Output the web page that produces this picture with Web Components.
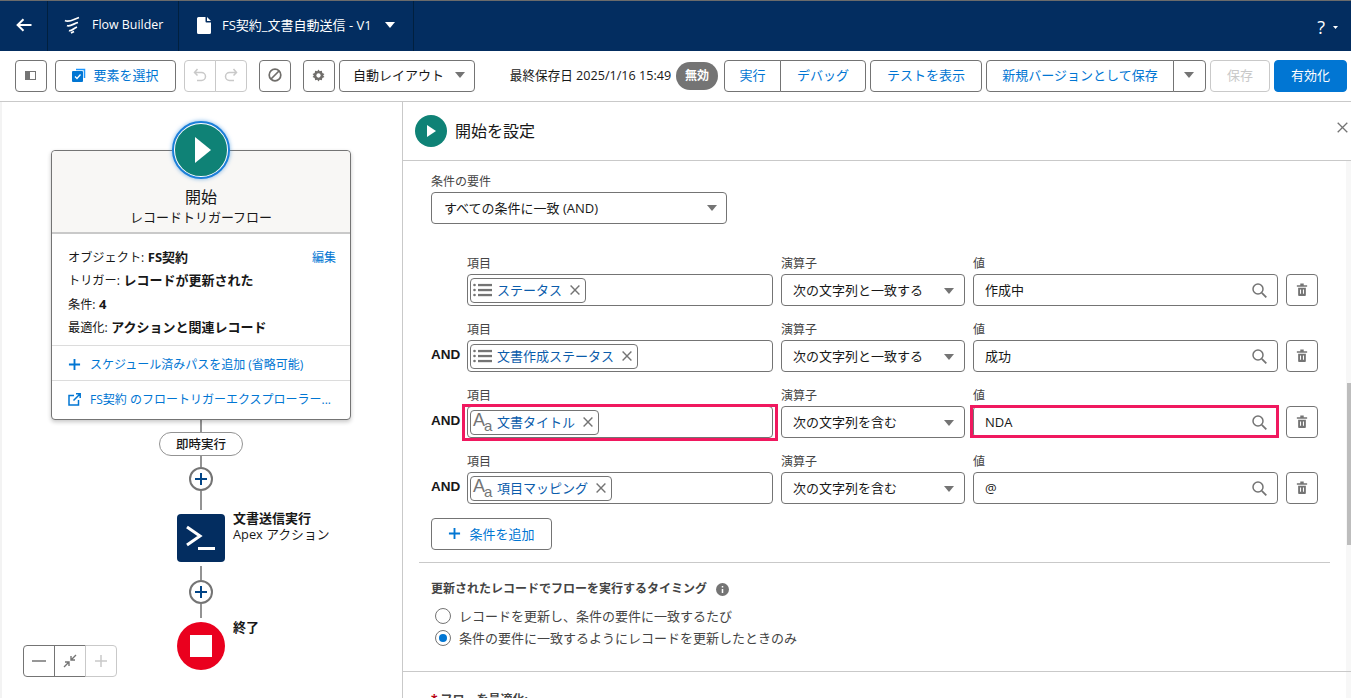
<!DOCTYPE html>
<html lang="ja"><head><meta charset="utf-8"><title>Flow Builder</title>
<style>
html,body{margin:0;height:100%;overflow:hidden;background:#fff}
body{font:13px/18px "Open Sans","Noto Sans CJK JP",sans-serif;color:#181818}
</style></head><body>
<fb-app></fb-app>
<script>
const caret=(c='#747474',w=10,h=6)=>`<svg width="${w}" height="${h}" viewBox="0 0 12 7" preserveAspectRatio="none" style="display:block"><path d="M0 0h12L6 7z" fill="${c}"/></svg>`;
const plus=(c,s=14,w=2)=>`<svg width="${s}" height="${s}" viewBox="0 0 14 14" style="display:block"><path d="M7 1v12M1 7h12" stroke="${c}" stroke-width="${w}" fill="none"/></svg>`;
function def(name,css,html){
  customElements.define(name,class extends HTMLElement{
    connectedCallback(){
      if(this.shadowRoot)return;
      const s=this.attachShadow({mode:'open'});
      const a=n=>this.getAttribute(n);
      s.innerHTML=`<style>${css}</style>`+(typeof html==='function'?html(a,this):html);
    }
  });
}
def('fb-btn',`
:host{display:inline-flex;align-items:center;justify-content:center;box-sizing:border-box;height:32px;border:1px solid #747474;border-radius:4px;background:#fff;color:#0176d3;font-size:13px;white-space:nowrap;gap:6px;padding-bottom:1px}
:host([off]){border-color:#c9c9c9;color:#c9c9c9}
:host([brand]){background:#0176d3;border-color:#0176d3;color:#fff}
:host([l]){border-radius:4px 0 0 4px}
:host([r]){border-radius:0 4px 4px 0;margin-left:-1px}
`,`<slot></slot>`);

def('fb-header',`
:host{display:flex;box-sizing:border-box;height:51px;flex:none;background:#032d60;border-top:1px solid #6b6b6b;color:#fff;align-items:stretch;font-size:12.400px}
.c{display:flex;align-items:center;box-sizing:border-box;border-right:1px solid #01203f}
.back{width:48px;justify-content:center;padding-bottom:2px}
.app{width:131px;padding-left:16px;gap:12px;padding-bottom:2px}
.doc{width:235px;padding-left:18px;padding-bottom:2px}
.doc .t{margin-left:11px;margin-right:13px;font-size:13px}
.help{margin-left:auto;display:flex;align-items:center;padding:2px 13px 0 0;gap:8px;font-size:18px}
`,`<div class="c back"><svg width="16" height="14" viewBox="0 0 16 14"><path d="M15.500 7H2M7.500 1.200 1.600 7l5.900 5.800" stroke="#fff" stroke-width="2" fill="none"/></svg></div>
<div class="c app"><svg width="16" height="18" viewBox="0 0 16 18"><path d="M1 4.500C5 7 10 3 15 1.500M3 9.500C6 11 10 7.500 14 6.500M5 14.500c2 1 5-2.500 8-3.500M7 17l3-1.500" stroke="#fff" stroke-width="1.800" fill="none"/></svg><span>Flow Builder</span></div>
<div class="c doc"><svg width="14" height="17" viewBox="0 0 14 17"><path d="M1.500 0H8.500V4.500a1 1 0 0 0 1 1H14V15.500a1.500 1.500 0 0 1-1.500 1.500h-11A1.500 1.500 0 0 1 0 15.500v-14A1.500 1.500 0 0 1 1.500 0zM10 0l4 4h-4z" fill="#fff"/></svg><span class="t">FS契約_文書自動送信 - V1</span>${caret('#fff')}</div>
<div class="help"><span>?</span>${caret('#fff',5,3)}</div>`);

def('fb-toolbar',`
:host{display:flex;box-sizing:border-box;height:51px;flex:none;align-items:center;padding:0 4px 1px 15px;border-bottom:1px solid #c9c9c9;background:#fff;font-size:12.600px;color:#181818}
.ib{width:32px}
.sel{width:121px;margin-left:8px;gap:7px}
.sel span{color:#0176d3}
.ur{width:32px}
.auto{display:flex;align-items:center;justify-content:space-between;box-sizing:border-box;width:136px;height:32px;margin-left:4px;padding:0 9px 1px 13px;border:1px solid #747474;border-radius:4px;font-size:13px}
.saved{margin-left:35px;white-space:nowrap;padding-top:1px}
.bdg{margin-left:5px;box-sizing:border-box;width:42px;height:28px;border-radius:14px;background:#747474;color:#fff;font-weight:700;font-size:12px;display:flex;align-items:center;justify-content:center}
`,`
<fb-btn class="ib"><svg width="11" height="9" viewBox="0 0 11 9"><rect x=".5" y=".5" width="10" height="8" fill="none" stroke="#747474"/><rect x="1" y="1" width="4" height="7" fill="#747474"/></svg></fb-btn>
<fb-btn class="sel"><svg width="14" height="14" viewBox="0 0 14 14"><path d="M4 1.500h8.500V10" fill="none" stroke="#1b96ff" stroke-width="1.500"/><rect x="0" y="3" width="11" height="11" rx="1" fill="#0176d3"/><path d="M3 8.500l2 2 3.500-4" stroke="#fff" stroke-width="1.300" fill="none"/></svg><span>要素を選択</span></fb-btn>
<fb-btn l off class="ur" style="margin-left:8px"><svg width="14" height="14" viewBox="0 0 14 14"><path d="M4.500 1 1.500 4.500l3 3M2 4.500h6.500a4 4 0 0 1 0 8H4" fill="none" stroke="#c9c9c9" stroke-width="1.500"/></svg></fb-btn>
<fb-btn r off class="ur"><svg width="14" height="14" viewBox="0 0 14 14"><path d="M9.500 1l3 3.500-3 3M12 4.500H5.500a4 4 0 0 0 0 8H10" fill="none" stroke="#c9c9c9" stroke-width="1.500"/></svg></fb-btn>
<fb-btn class="ib" style="margin-left:12px"><svg width="14" height="14" viewBox="0 0 14 14"><circle cx="7" cy="7" r="5.800" fill="none" stroke="#706e6b" stroke-width="1.700"/><path d="M3 11 11 3" stroke="#706e6b" stroke-width="1.700"/></svg></fb-btn>
<fb-btn class="ib" style="margin-left:12px"><svg width="13" height="13" viewBox="0 0 14 14"><path d="M7 .5l1.300 2 2.300-.5.500 2.300 2.300 1.200L12 7l1.400 1.500-2.300 1.200-.5 2.300-2.300-.5L7 13.500l-1.300-2-2.300.5-.5-2.300L.6 8.500 2 7 .6 5.500l2.300-1.200.5-2.300 2.300.5z" fill="#706e6b"/><circle cx="7" cy="7" r="2.300" fill="#fff"/></svg></fb-btn>
<div class="auto"><span>自動レイアウト</span>${caret()}</div>
<span class="saved">最終保存日 2025/1/16 15:49</span><span class="bdg">無効</span>
<fb-btn l style="width:57px;margin-left:6px">実行</fb-btn><fb-btn r style="width:86px">デバッグ</fb-btn>
<fb-btn style="width:112px;margin-left:4px">テストを表示</fb-btn>
<fb-btn l style="width:188px;margin-left:4px">新規バージョンとして保存</fb-btn><fb-btn r style="width:33px">${caret()}</fb-btn>
<fb-btn off style="width:60px;margin-left:4px">保存</fb-btn>
<fb-btn brand style="width:73px;margin-left:4px">有効化</fb-btn>`);

def('fb-node-row',`
:host{display:flex;align-items:baseline;padding:0 14px 0 16px;height:23.400px;line-height:23.400px;font-size:12.200px;white-space:nowrap}
b{margin-left:3.500px;font-weight:700;font-size:13px}
a{margin-left:auto;color:#0176d3;font-size:12px}
`,a=>`<span>${a('k')}</span><b>${a('v')}</b>${a('edit')!==null?'<a>編集</a>':''}`);

def('fb-card-link',`
:host{display:flex;align-items:center;box-sizing:border-box;height:35px;border-top:1px solid #dcdcdc;padding:3px 16px 0;color:#0176d3;font-size:12px;gap:9px;white-space:nowrap}
:host([last]){height:38px;padding:0 16px}
`,`<slot name="i"></slot><slot></slot>`);

def('fb-start-card',`
:host{display:block;position:relative;box-sizing:border-box;width:300px;height:270px;border:1px solid #747474;border-radius:4px;background:#fff;box-shadow:0 2px 4px rgba(0,0,0,.22)}
.head{height:83px;background:#f8f7f5;border-bottom:2px solid #c9c9c9;border-radius:4px 4px 0 0;box-sizing:border-box;text-align:center;padding-top:36px}
.t{font-size:16px;line-height:20px}
.s{font-size:13px;line-height:20px}
.body{padding:12px 0 0;height:111px;box-sizing:border-box}
.play{position:absolute;left:121px;top:-29px;width:56px;height:56px;box-sizing:border-box;border-radius:50%;background:#0f8276;border:2px solid #fff;outline:2px solid #1b7fd8;outline-offset:-1px;box-shadow:0 0 4px 1px rgba(27,127,216,.6);display:flex;align-items:center;justify-content:center}
.play svg{margin-left:3px}
`,`<div class="play"><svg width="16" height="26" viewBox="0 0 16 26"><path d="M0 0l16 13L0 26z" fill="#fff"/></svg></div>
<div class="head"><div class="t">開始</div><div class="s">レコードトリガーフロー</div></div>
<div class="body"><fb-node-row k="オブジェクト:" v="FS契約" edit></fb-node-row><fb-node-row k="トリガー:" v="レコードが更新された"></fb-node-row><fb-node-row k="条件:" v="4"></fb-node-row><fb-node-row k="最適化:" v="アクションと関連レコード"></fb-node-row></div>
<fb-card-link><span slot="i" style="display:flex">${plus('#0176d3',13)}</span>スケジュール済みパスを追加 (省略可能)</fb-card-link>
<fb-card-link last><span slot="i" style="display:flex"><svg width="13" height="13" viewBox="0 0 13 13"><path d="M6 2.500H1v9.500h9.500V7M8 .8h4.200V5M12 1 5.500 7.500" fill="none" stroke="#0176d3" stroke-width="1.500"/></svg></span>FS契約 のフロートリガーエクスプローラー...</fb-card-link>`);

def('fb-add',`
:host{display:flex;box-sizing:border-box;width:24px;height:24px;border:2px solid #747474;border-radius:50%;background:#fff;align-items:center;justify-content:center;flex:none}
`,plus('#014486',14,2));
def('fb-line',`:host{display:block;width:2px;background:#939393;flex:none}`,'');

def('fb-canvas',`
:host{display:flex;flex-direction:column;align-items:center;position:relative;box-sizing:border-box;width:403px;flex:none;border-left:2px solid #f3f3f3;border-right:1px solid #c9c9c9;padding:48px 0 0 0;overflow:hidden}
.col{display:flex;flex-direction:column;align-items:center;margin-left:-2px}
.pill{box-sizing:border-box;width:84px;height:24px;border:1px solid #939393;border-radius:12px;background:#fff;font-size:12.500px;font-weight:500;display:flex;align-items:center;justify-content:center;flex:none;padding-top:1px}
.node{position:relative;flex:none;width:48px;height:48px}
.box{width:48px;height:48px;border-radius:4px;background:#032d60;display:block}
.stop{width:48px;height:48px;border-radius:50%;background:#ea001e;display:flex;align-items:center;justify-content:center}
.stop i{display:block;width:22px;height:22px;background:#fff}
.lb{position:absolute;left:56px;top:-4px;white-space:nowrap;font-size:12.800px;line-height:16px}
.lb b{display:block;font-weight:700;font-size:13px}
.zoom{position:absolute;left:21px;top:543px;display:flex}
.zoom fb-btn{width:32px}
`,`<div class="col">
<fb-start-card></fb-start-card>
<fb-line style="height:12px"></fb-line><div class="pill">即時実行</div>
<fb-line style="height:11px"></fb-line><fb-add></fb-add><fb-line style="height:19px"></fb-line>
<div class="node" style="margin-top:4px"><svg class="box" viewBox="0 0 48 48"><path d="M10 13l13 9-13 9" fill="none" stroke="#fff" stroke-width="3"/><path d="M21 34.500h17" stroke="#fff" stroke-width="3"/></svg><div class="lb"><b>文書送信実行</b>Apex アクション</div></div>
<fb-line style="height:14px;margin-top:4px"></fb-line><fb-add></fb-add><fb-line style="height:14px"></fb-line>
<div class="node" style="margin-top:4px"><div class="stop"><i></i></div><div class="lb" style="top:-3px"><b>終了</b></div></div>
</div>
<div class="zoom">
<fb-btn l><svg width="14" height="14" viewBox="0 0 14 14"><path d="M0 7h14" stroke="#747474" stroke-width="1.500"/></svg></fb-btn>
<fb-btn r style="border-radius:0;"><svg width="14" height="14" viewBox="0 0 14 14"><path d="M13 1 8.500 5.500M8 2v4h4M1 13l4.500-4.500M6 12V8H2" stroke="#747474" stroke-width="1.400" fill="none"/></svg></fb-btn>
<fb-btn r off style="margin-left:-1px">${plus('#c9c9c9',14,1.500)}</fb-btn>
</div>`);

def('fb-label',`:host{display:block;font-size:12px;line-height:18px;color:#444;white-space:nowrap}`,`<slot></slot>`);

def('fb-input',`
:host{display:flex;position:relative;align-items:center;box-sizing:border-box;height:32px;border:1px solid #747474;border-radius:4px;background:#fff;font-size:13px;padding:0 10px 0 11px;white-space:nowrap}
.a{margin-left:auto;display:flex;padding-top:1px}
.hl{position:absolute;border:3px solid #f0185f;pointer-events:none}
`,a=>`<slot></slot><span class="a"><slot name="a"></slot></span>${a('hl')?`<div class="hl" style="inset:${a('hl')}"></div>`:''}`);

def('fb-pill',`
:host{display:flex;align-items:center;box-sizing:border-box;height:25px;border:1px solid #747474;border-radius:4px;padding:0 5px 0 2px;color:#0b5cab;font-size:13px;white-space:nowrap;background:#fff}
.t{margin-left:5px}
.x{margin-left:8px;display:flex}
.aa{color:#747474;width:19px;height:23px;position:relative;font-family:"Liberation Sans",sans-serif;flex:none}
.aa i{position:absolute;font-style:normal;line-height:1}
`,a=>{
 const ic=a('icon')==='list'
 ?`<svg width="19" height="14" viewBox="0 0 19 14"><g fill="#747474"><circle cx="1.500" cy="2" r="1.300"/><circle cx="1.500" cy="7" r="1.300"/><circle cx="1.500" cy="12" r="1.300"/><rect x="5" y=".9" width="14" height="2.300"/><rect x="5" y="5.900" width="14" height="2.300"/><rect x="5" y="10.900" width="14" height="2.300"/></g></svg>`
 :`<span class="aa"><i style="left:0;top:0;font-size:18px">A</i><i style="left:11px;top:7px;font-size:15px">a</i></span>`;
 return ic+`<span class="t">${a('label')}</span><span class="x"><svg width="10" height="10" viewBox="0 0 10 10"><path d="M.6.600l8.800 8.800M9.400.600l-8.800 8.800" stroke="#747474" stroke-width="1.400"/></svg></span>`;
});

const search=`<svg width="15" height="15" viewBox="0 0 15 15" style="display:block"><circle cx="6" cy="6" r="5" fill="none" stroke="#747474" stroke-width="1.500"/><path d="M9.800 9.800 14.300 14.300" stroke="#747474" stroke-width="1.800"/></svg>`;
def('fb-condition',`
:host{display:grid;grid-template-columns:28px 306px 184px 305px 32px;column-gap:8px;height:66px;box-sizing:border-box}
.and{font-weight:700;font-size:13.500px;line-height:18px;padding-top:30px;white-space:nowrap;font-family:"Liberation Sans",sans-serif;color:#181818}
.f{display:flex;flex-direction:column;padding-top:6px;box-sizing:border-box}
.f fb-label{height:18px;line-height:16px}
.fi{padding:0 0 0 2px}
.tr{margin-top:24px;width:32px}
`,a=>`<div class="and">${a('and')!==null?'AND':''}</div>
<div class="f"><fb-label>項目</fb-label><fb-input class="fi" ${a('hf')?`hl="${a('hf')}"`:''}><fb-pill icon="${a('icon')}" label="${a('field')}"></fb-pill></fb-input></div>
<div class="f"><fb-label>演算子</fb-label><fb-input><span>${a('op')}</span><span slot="a">${caret()}</span></fb-input></div>
<div class="f"><fb-label>値</fb-label><fb-input ${a('hv')?`hl="${a('hv')}"`:''}><span>${a('val')}</span><span slot="a">${search}</span></fb-input></div>
<fb-btn class="tr"><svg width="12" height="13" viewBox="0 0 14 15"><path d="M5 1.500h4M1 3.500h12" stroke="#747474" stroke-width="1.800" fill="none"/><path d="M2.500 5.500h9V14a1 1 0 0 1-1 1h-7a1 1 0 0 1-1-1z" fill="#747474"/><path d="M5.300 7.500v5M8.700 7.500v5" stroke="#fff" stroke-width="1.200"/></svg></fb-btn>`);

def('fb-radio',`
:host{display:flex;align-items:center;height:22px;font-size:13px;color:#444;white-space:nowrap;padding-left:4px;gap:8px}
.r{box-sizing:border-box;width:16px;height:16px;border:1px solid #747474;border-radius:50%;background:#fff;display:flex;align-items:center;justify-content:center;flex:none}
.r i{display:block;width:8px;height:8px;border-radius:50%;background:#0176d3}
`,a=>`<span class="r">${a('on')!==null?'<i></i>':''}</span><slot></slot>`);

def('fb-panel',`
:host{display:flex;flex-direction:column;flex:1;min-width:0;position:relative;overflow:hidden;background:#fff}
.h{flex:none;height:59px;box-sizing:border-box;border-bottom:1px solid #c9c9c9;display:flex;align-items:center;padding:0 0 0 12px;position:relative}
.ic{width:32px;height:32px;border-radius:50%;background:#0f8276;display:flex;align-items:center;justify-content:center}
.ti{margin-left:8px;font-size:16px;line-height:20px}
.cl{margin-left:auto;margin-right:3px;display:flex;margin-top:-8px}
.b{flex:1;padding:12px 0 0 28px;position:relative}
.s{width:296px;margin-top:1px;display:flex;align-items:center;justify-content:space-between;box-sizing:border-box;height:32px;border:1px solid #747474;border-radius:4px;padding:0 9px 0 12px;font-size:13px}
.conds{margin-top:26px}
.add{width:121px;margin-top:4px;gap:8px}
.add span{color:#0176d3}
.hr{height:1px;background:#c9c9c9;margin:12px 21px 0 -12px}
.q{margin-top:17px;font-weight:700;font-size:12px;line-height:18px;color:#444;display:flex;align-items:center;gap:9px}
.hr2{height:1px;background:#c9c9c9;margin:22px 0 0 -28px}
.opt{margin-top:19px;font-size:12px;font-weight:700;color:#444}
.opt em{color:#ba0517;font-style:normal;margin-right:3px}
.tk{position:absolute;right:0;top:59px;bottom:0;width:5px;background:#f7f7f7}
.sb{position:absolute;right:0;top:281px;width:4px;height:162px;background:#bdbdbd}
`,`<div class="h"><div class="ic"><svg width="9" height="12" viewBox="0 0 9 12"><path d="M0 0l9 6-9 6z" fill="#fff"/></svg></div><div class="ti">開始を設定</div>
<div class="cl"><svg width="11" height="11" viewBox="0 0 11 11"><path d="M.7.700l9.600 9.600M10.300.700.7 10.300" stroke="#747474" stroke-width="1.300"/></svg></div></div>
<div class="tk"></div>
<div class="b">
<fb-label>条件の要件</fb-label>
<div class="s"><span>すべての条件に一致 (AND)</span>${caret()}</div>
<div class="conds">
<fb-condition icon="list" field="ステータス" op="次の文字列と一致する" val="作成中"></fb-condition>
<fb-condition and icon="list" field="文書作成ステータス" op="次の文字列と一致する" val="成功"></fb-condition>
<fb-condition and icon="text" field="文書タイトル" op="次の文字列を含む" val="NDA" hf="-3px -6px -4px -6px" hv="-2px -2px -1px -4px"></fb-condition>
<fb-condition and icon="text" field="項目マッピング" op="次の文字列を含む" val="@"></fb-condition>
</div>
<fb-btn class="add">${plus('#0176d3',13)}<span>条件を追加</span></fb-btn>
<div class="hr"></div>
<div class="q">更新されたレコードでフローを実行するタイミング<svg width="13" height="13" viewBox="0 0 13 13"><circle cx="6.500" cy="6.500" r="6.500" fill="#747474"/><path d="M6.500 3v1.500M6.500 6v4" stroke="#fff" stroke-width="1.500"/></svg></div>
<div style="margin-top:7px"><fb-radio>レコードを更新し、条件の要件に一致するたび</fb-radio><fb-radio on>条件の要件に一致するようにレコードを更新したときのみ</fb-radio></div>
<div class="hr2"></div>
<div class="opt"><em>*</em>フローを最適化:</div>
</div><div class="sb"></div>`);

def('fb-app',`
:host{display:flex;flex-direction:column;height:698px;width:1351px;overflow:hidden}
.m{display:flex;flex:1;min-height:0}
`,`<fb-header></fb-header><fb-toolbar></fb-toolbar><div class="m"><fb-canvas></fb-canvas><fb-panel></fb-panel></div>`);
</script></body></html>
